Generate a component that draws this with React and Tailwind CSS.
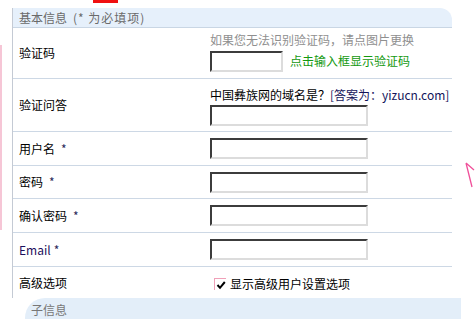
import React from "react";

function Field({ small }) {
  return (
    <div
      className={
        (small ? "w-[73px] " : "w-[158px] ") +
        "h-[21px] bg-white border-2 border-t-[#3c3c3c] border-l-[#3c3c3c] border-r-[#dcdcdc] border-b-[#dcdcdc]"
      }
    />
  );
}

function Row({ label, star, starGap, height, labelColor, children, last }) {
  return (
    <div
      className={
        "flex items-center " +
        height +
        (last ? "" : " border-b border-[#cdd8e5]")
      }
    >
      <div className={"w-[197px] pl-[6px] " + (labelColor || "text-black")}>
        {label}
        {star && <span className={(starGap || "ml-[6px]") + " text-[#2a2a5a]"}>*</span>}
      </div>
      <div className="flex-1">{children}</div>
    </div>
  );
}

export default function App() {
  return (
    <div className="relative w-[475px] h-[319px] overflow-hidden bg-white text-[12px] leading-[14px] font-['Noto_Sans_CJK_SC',sans-serif]">
      {/* bits of the page around the form */}
      <div className="absolute left-[93px] top-0 w-[25px] h-[3px] bg-[#f01010]" />
      <div className="absolute left-0 top-[45px] w-[2px] h-[185px] bg-[#f6c6d6]" />
      <svg className="absolute left-[464px] top-[160px]" width="11" height="28" viewBox="0 0 11 28">
        <path d="M2 3 L8 27 M2 3 L10 10" stroke="#f0509a" strokeWidth="1.3" fill="none" />
      </svg>

      <div className="pt-2 pl-3">
        <div className="w-[440px] border-l border-[#c4cad4]">
          <div className="h-[20px] flex items-center pl-[6px] bg-[#e6f0fb] border-b border-[#c9d6e4] text-[#6a6a6a] rounded-tr-[12px]">
            基本信息 <span className="ml-[6px] tracking-[1px]">(* 为必填项)</span>
          </div>

          <Row label="验证码" height="h-[51px]">
            <div className="flex flex-col pb-[2px]">
              <span className="text-[#8f8f8f]">如果您无法识别验证码，请点图片更换</span>
              <div className="flex items-center mt-[4px]">
                <Field small />
                <span className="ml-[7px] text-[#13990f]">点击输入框显示验证码</span>
              </div>
            </div>
          </Row>

          <Row label="验证问答" height="h-[53px]">
            <div className="flex flex-col pt-[3px]">
              <span>
                <span className="text-black">中国彝族网的域名是？</span>
                <span className="text-[#14145a]">[答案为：yizucn.com]</span>
              </span>
              <div className="mt-[3px]">
                <Field />
              </div>
            </div>
          </Row>

          <Row label="用户名" star height="h-[34px]">
            <Field />
          </Row>
          <Row label="密码" star height="h-[33px]">
            <Field />
          </Row>
          <Row label="确认密码" star height="h-[34px]">
            <Field />
          </Row>
          <Row label="Email" star starGap="ml-[3px]" height="h-[34px]" labelColor="text-[#1c0f5c]">
            <Field />
          </Row>
          <Row label="高级选项" height="h-[31px]" last>
            <div className="flex items-center pl-[4px] pt-[3px]">
              <span className="relative w-[12px] h-[12px] border-t border-l border-[#f0a0b8]">
                <svg className="absolute left-[1px] top-[1px]" width="10" height="10" viewBox="0 0 10 10">
                  <path d="M1.5 5 L4 7.8 L8.8 2" stroke="#000" strokeWidth="2" fill="none" />
                </svg>
              </span>
              <span className="ml-[4px] text-black">显示高级用户设置选项</span>
            </div>
          </Row>
        </div>

        <div className="ml-[13px] w-[436px] h-[21px] bg-[#e3eef9] rounded-tl-[20px] pl-[6px] pt-[5px] text-[#777]">
          子信息
        </div>
      </div>
    </div>
  );
}
